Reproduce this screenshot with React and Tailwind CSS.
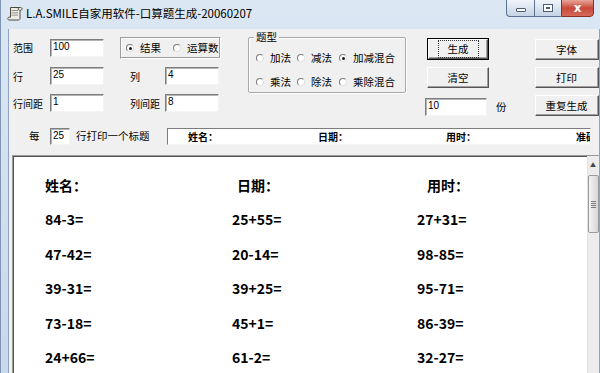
import React from "react";

const problems = [
  ["84-3=", "25+55=", "27+31="],
  ["47-42=", "20-14=", "98-85="],
  ["39-31=", "39+25=", "95-71="],
  ["73-18=", "45+1=", "86-39="],
  ["24+66=", "61-2=", "32-27="],
];

function AppIcon() {
  return (
    <svg width="16" height="15" viewBox="0 0 16 15">
      <path d="M3.5 1.5h10c.9 0 1.5.6 1.5 1.4s-.6 1.4-1.5 1.4H13v8.2c0 .9-.6 1.5-1.5 1.5H2.3c-.9 0-1.5-.6-1.5-1.4s.6-1.4 1.5-1.4h1.2V1.5z" fill="#ecebe4" stroke="#4d4b46" strokeWidth="1" />
      <path d="M4.5 4.5h6.5M4.5 6.8h6.5M4.5 9.1h6.5" stroke="#8a877f" strokeWidth="0.9" />
      <path d="M12.5 1.5c-.8 0-1.4.6-1.4 1.4s.6 1.4 1.4 1.4" fill="none" stroke="#4d4b46" strokeWidth="0.9" />
    </svg>
  );
}

function Field({ value, className }) {
  return (
    <div
      className={`${className} bg-white border border-t-[#7d7d7d] border-l-[#7d7d7d] border-r-[#f4f4f4] border-b-[#f4f4f4] shadow-[inset_1px_1px_0_#b4b4b4] pl-[2px] text-[10px] leading-[14px] font-['Liberation_Sans',sans-serif] text-black`}
    >
      {value}
    </div>
  );
}

function Radio({ checked, label, className }) {
  return (
    <div className={`${className} flex items-center`}>
      <span className="w-[8px] h-[8px] rounded-full border border-t-[#7b7b7b] border-l-[#7b7b7b] border-r-[#e2e2e2] border-b-[#e2e2e2] bg-white flex items-center justify-center">
        {checked && <span className="w-[3px] h-[3px] rounded-full bg-[#1a1a1a]" />}
      </span>
      <span className="ml-[6px]">{label}</span>
    </div>
  );
}

function Btn({ children, className }) {
  return (
    <div
      className={`${className} flex items-center justify-center bg-[#f0f0f0] border border-t-white border-l-white border-r-[#555555] border-b-[#555555] shadow-[inset_-1px_-1px_0_#a0a0a0] text-[10.5px]`}
    >
      {children}
    </div>
  );
}

export default function App() {
  return (
    <div className="w-[600px] h-[373px] overflow-hidden flex flex-col bg-gradient-to-b from-[#dce7f4] to-[#c9d8ea] border-l border-[#7e95b3] font-['Noto_Sans_CJK_SC',sans-serif] text-black">
      {/* title bar */}
      <div className="h-[29px] shrink-0 flex items-start">
        <div className="mt-[6px] ml-[6px]">
          <AppIcon />
        </div>
        <span className="ml-[3px] mt-[5px] text-[11.5px] leading-[16px]">L.A.SMILE自家用软件-口算题生成-20060207</span>
        <div className="ml-auto mr-[6px] flex h-[18px] -mt-px">
          <div className="w-[28px] h-full rounded-bl-[4px] border border-r-0 border-[#5c7291] bg-gradient-to-b from-[#f1f5fa] to-[#c5d3e5] flex items-center justify-center">
            <span className="w-[10px] h-[4px] mt-[4px] bg-white border border-[#4d5f78] rounded-[1px]" />
          </div>
          <div className="w-[27px] h-full border border-r-0 border-[#5c7291] bg-gradient-to-b from-[#f1f5fa] to-[#c5d3e5] flex items-center justify-center">
            <span className="w-[10px] h-[8px] border border-[#4d5f78] bg-white flex items-center justify-center">
              <span className="w-[4px] h-[2px] border border-[#4d5f78]" />
            </span>
          </div>
          <div className="w-[33px] h-full rounded-br-[4px] border border-[#8a2f26] bg-gradient-to-b from-[#e7a598] via-[#c9483a] to-[#d5695a] flex items-center justify-center text-white text-[12px] font-bold leading-none font-['DejaVu_Sans',sans-serif]">
            x
          </div>
        </div>
      </div>

      {/* client */}
      <div className="flex-1 flex pl-[7px] pr-[7px] min-h-0">
        <div className="flex-1 flex flex-col bg-[#f0f0f0] border-l border-r border-[#8ea4c1] text-[10px] min-h-0">
          <div className="h-[90px] shrink-0 flex">
            {/* left block */}
            <div className="flex flex-col pt-[8px] pl-[4px]">
              <div className="h-[22px] flex items-center">
                <span className="w-[37px] leading-[14px]">范围</span>
                <Field value="100" className="w-[54px] h-[18px]" />
                <div className="ml-[16px] w-[101px] h-[22px] flex items-center pl-[5px] border border-t-[#9c9c9c] border-l-[#9c9c9c] border-r-white border-b-white shadow-[inset_-1px_-1px_0_#9c9c9c,inset_1px_1px_0_#fff] text-[10.5px]">
                  <Radio checked label="结果" className="w-[47px]" />
                  <Radio label="运算数" />
                </div>
              </div>
              <div className="h-[18px] mt-[8px] flex items-center">
                <span className="w-[37px]">行</span>
                <Field value="25" className="w-[54px] h-[18px]" />
                <span className="ml-[26px] w-[35px]">列</span>
                <Field value="4" className="w-[54px] h-[18px]" />
              </div>
              <div className="h-[18px] mt-[9px] flex items-center">
                <span className="w-[37px]">行间距</span>
                <Field value="1" className="w-[54px] h-[18px]" />
                <span className="ml-[26px] w-[35px]">列间距</span>
                <Field value="8" className="w-[54px] h-[18px]" />
              </div>
            </div>

            {/* 题型 group */}
            <div className="relative ml-[27px] mt-[8px] w-[158px] h-[56px] border border-[#a9a9a9] shadow-[inset_1px_1px_0_#fff,1px_1px_0_#fff] rounded-[2px] pl-[7px] pt-[13px] text-[10.5px]">
              <span className="absolute -top-[8px] left-[5px] px-[2px] bg-[#f0f0f0] leading-[14px]">题型</span>
              <div className="h-[14px] flex items-center">
                <Radio label="加法" className="w-[41px]" />
                <Radio label="减法" className="w-[42px]" />
                <Radio checked label="加减混合" />
              </div>
              <div className="h-[14px] mt-[10px] flex items-center">
                <Radio label="乘法" className="w-[41px]" />
                <Radio label="除法" className="w-[42px]" />
                <Radio label="乘除混合" />
              </div>
            </div>

            {/* button column 1 */}
            <div className="ml-[21px] flex flex-col pt-[9px]">
              <div className="w-[62px] h-[22px] border border-black">
                <Btn className="w-full h-full">
                  <span className="px-[9px] border border-dotted border-[#333]">生成</span>
                </Btn>
              </div>
              <Btn className="w-[62px] h-[21px] mt-[7px]">清空</Btn>
              <div className="flex items-center mt-[10px] -ml-[2px]">
                <Field value="10" className="w-[62px] h-[18px]" />
                <span className="ml-[9px] text-[10.5px]">份</span>
              </div>
            </div>

            {/* button column 2 */}
            <div className="ml-[28px] flex flex-col pt-[10px]">
              <Btn className="w-[64px] h-[21px]">字体</Btn>
              <Btn className="w-[64px] h-[21px] mt-[7px]">打印</Btn>
              <Btn className="w-[64px] h-[21px] mt-[7px]">重复生成</Btn>
            </div>
          </div>

          {/* row 4 */}
          <div className="h-[18px] mt-[8px] shrink-0 flex items-center text-[10.5px]">
            <span className="ml-[20px] w-[21px]">每</span>
            <Field value="25" className="w-[20px] h-[17px]" />
            <span className="ml-[6px] w-[90px]">行打印一个标题</span>
            <div className="ml-[1px] w-[424px] h-[17px] bg-white border border-t-[#7d7d7d] border-l-[#7d7d7d] border-r-[#f4f4f4] border-b-[#f4f4f4] flex items-center pl-[20px] overflow-hidden whitespace-nowrap font-semibold text-[10px]">
              <span className="w-[130px] shrink-0">姓名：</span>
              <span className="w-[128px] shrink-0">日期：</span>
              <span className="w-[130px] shrink-0">用时：</span>
              <span className="shrink-0">准确率：</span>
            </div>
          </div>

          {/* document */}
          <div className="flex-1 mt-[10px] ml-[3px] flex bg-white border-t border-l border-[#9a9a9a] shadow-[inset_1px_1px_0_#555] min-h-0 overflow-hidden">
            <div className="flex-1 pt-[12px] pl-[32px] text-[14px] font-bold leading-[34.4px]">
              <div className="flex">
                <span className="w-[192px]">姓名：</span>
                <span className="w-[190px]">日期：</span>
                <span>用时：</span>
              </div>
              {problems.map((row, i) => (
                <div key={i} className="flex">
                  <span className="w-[187px]">{row[0]}</span>
                  <span className="w-[185px]">{row[1]}</span>
                  <span>{row[2]}</span>
                </div>
              ))}
            </div>
            {/* scrollbar */}
            <div className="w-[12px] shrink-0 bg-[#ececec] border-l border-[#e2e2e2] flex flex-col items-center">
              <span className="mt-[5px] text-[6px] leading-[8px] text-[#444]">▲</span>
              <div className="mt-[6px] w-[11px] h-[58px] rounded-[2px] border border-[#9a9a9a] bg-gradient-to-r from-[#f4f4f4] to-[#d6d6d6] flex flex-col items-center justify-center gap-[1px]">
                <span className="w-[5px] h-px bg-[#7a7a7a]" />
                <span className="w-[5px] h-px bg-[#7a7a7a]" />
                <span className="w-[5px] h-px bg-[#7a7a7a]" />
                <span className="w-[5px] h-px bg-[#7a7a7a]" />
              </div>
            </div>
          </div>
        </div>
      </div>
    </div>
  );
}
